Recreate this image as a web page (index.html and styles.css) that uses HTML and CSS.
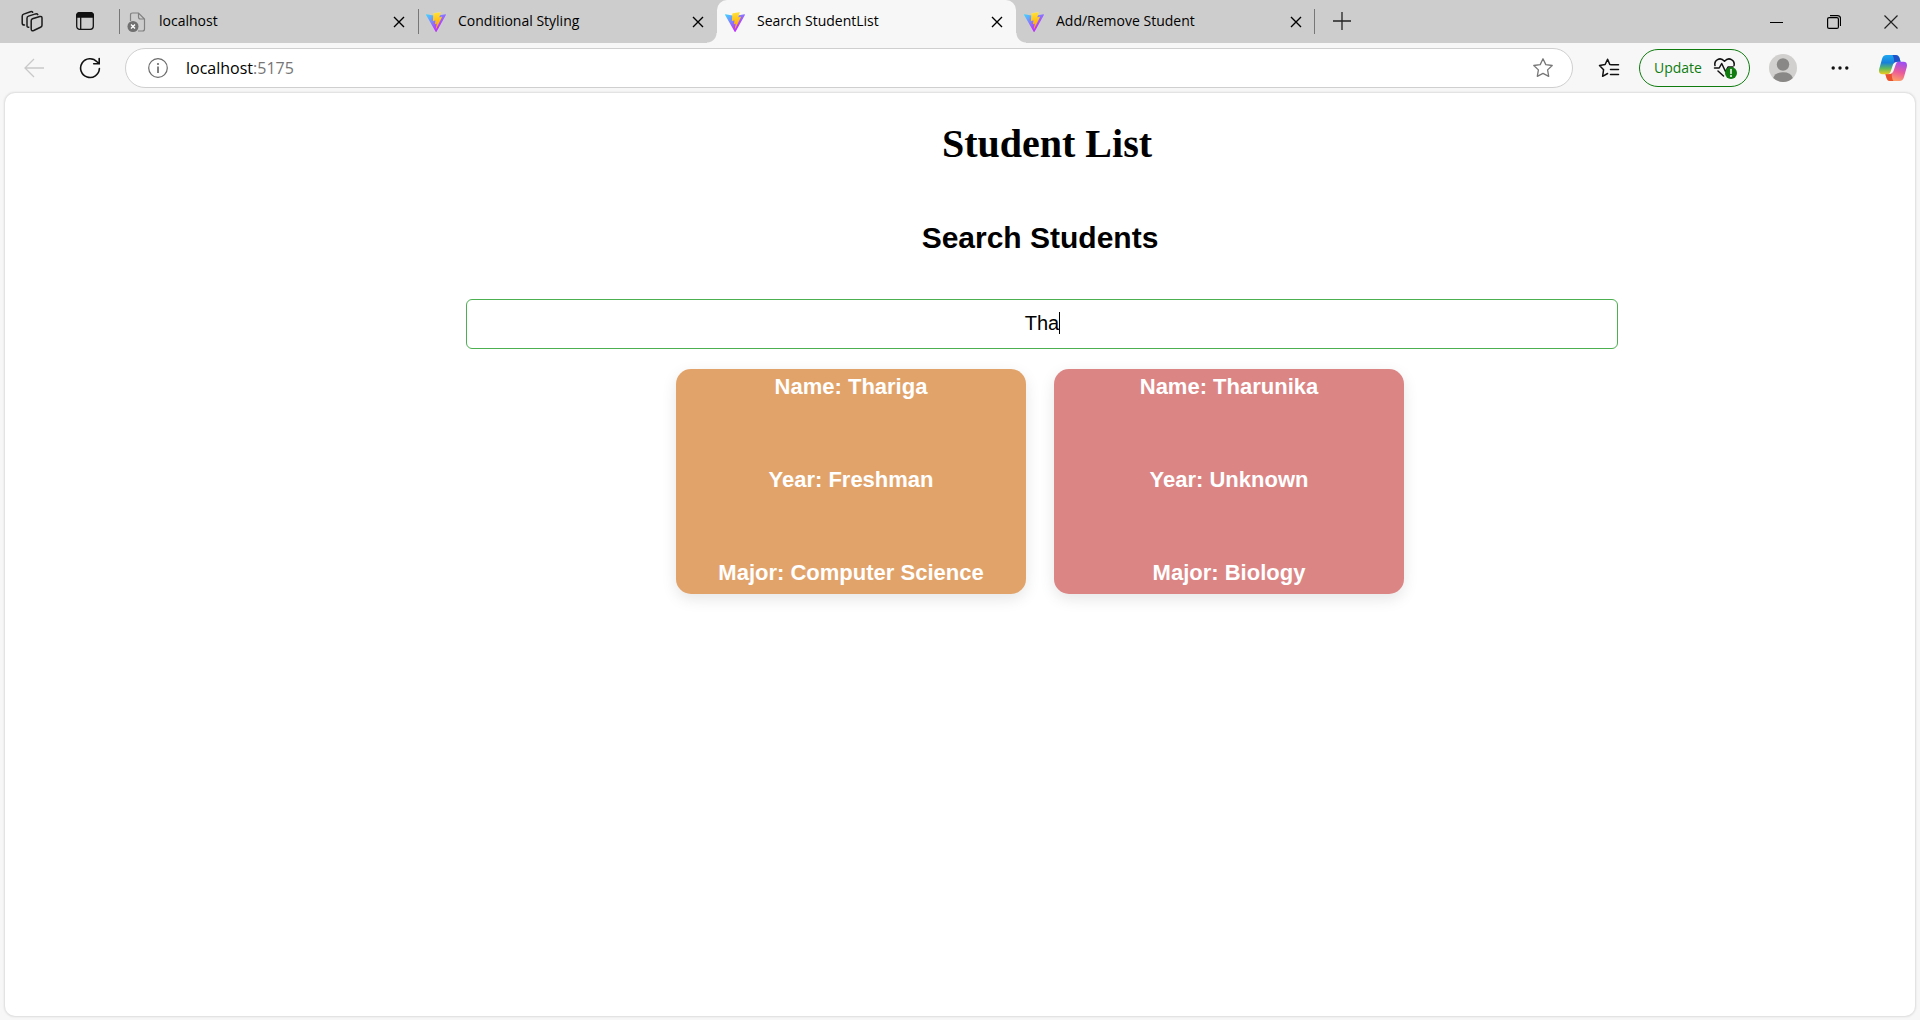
FILE: index.html
```html
<!DOCTYPE html>
<html lang="en">
<head>
<meta charset="utf-8">
<title>Search StudentList</title>
<link rel="stylesheet" href="styles.css">
</head>
<body>
<svg class="defs" aria-hidden="true">
  <defs>
    <linearGradient id="vite-a" x1="-1%" x2="58%" y1="8%" y2="79%"><stop offset="0" stop-color="#41d1ff"/><stop offset="1" stop-color="#bd34fe"/></linearGradient>
    <linearGradient id="vite-b" x1="43%" x2="50%" y1="2%" y2="89%"><stop offset="0" stop-color="#ffea83"/><stop offset=".08" stop-color="#ffdd35"/><stop offset="1" stop-color="#ffa800"/></linearGradient>
    <linearGradient id="cp-a" x1="0" x2="0" y1="0" y2="1"><stop offset="0" stop-color="#1fa8f0"/><stop offset=".4" stop-color="#1580dc"/><stop offset=".7" stop-color="#5fb95e"/><stop offset="1" stop-color="#f0cc1c"/></linearGradient>
    <linearGradient id="cp-b" x1=".6" x2=".3" y1="0" y2="1"><stop offset="0" stop-color="#a04df0"/><stop offset=".5" stop-color="#ec5c98"/><stop offset="1" stop-color="#ffa860"/></linearGradient>
    <symbol id="vite" viewBox="0 0 256 257">
      <path fill="url(#vite-a)" d="M255.153 37.938L134.897 252.976c-2.483 4.44-8.862 4.466-11.382.048L.875 37.958c-2.746-4.814 1.371-10.646 6.827-9.67l120.385 21.517a6.537 6.537 0 0 0 2.322-.004l117.867-21.483c5.438-.991 9.574 4.796 6.877 9.62Z"/>
      <path fill="url(#vite-b)" d="M185.432.063L96.44 17.501a3.268 3.268 0 0 0-2.634 3.014l-5.474 92.456a3.268 3.268 0 0 0 3.997 3.378l24.777-5.718c2.318-.535 4.413 1.507 3.936 3.838l-7.361 36.047c-.495 2.426 1.782 4.5 4.151 3.78l15.304-4.649c2.372-.72 4.652 1.36 4.15 3.788l-11.698 56.621c-.732 3.542 3.979 5.473 5.943 2.437l1.313-2.028l72.516-144.72c1.215-2.423-.88-5.186-3.54-4.672l-25.505 4.922c-2.396.462-4.435-1.77-3.759-4.114l16.646-57.705c.677-2.35-1.37-4.583-3.769-4.113Z"/>
    </symbol>
    <symbol id="cross" viewBox="0 0 12 12"><path d="M1 1l10 10M11 1L1 11" fill="none" stroke="currentColor" stroke-width="1.4"/></symbol>
  </defs>
</svg>

<div class="browser">
  <header class="tab-strip">
    <div class="strip-tools">
      <button class="icon-btn" aria-label="Workspaces">
        <svg width="22" height="22" viewBox="0 0 22 22" fill="none" stroke="#1b1b1b" stroke-width="1.5" stroke-linejoin="round" stroke-linecap="round"><path d="M11.500 8.700 18.800 6.500q2.200-.5 2.200 1.500v7.200q0 1.500-1.500 2.100l-6.800 3.200q-2.500.9-2.500-1.400V10.800q0-1.600 1.300-2.100Z"/><path d="M7.800 17.200q-1.800.300-1.800-1.400V8.300q0-1.700 1.500-2.200L14.500 3.900q1.700-.400 2.300.700"/><path d="M3.500 15Q1.200 15 1.200 13.200V6.300Q1.200 4.600 2.700 4.100L9.500 1.700q1.500-.400 2.200.500"/></svg>
      </button>
      <button class="icon-btn" aria-label="Tab actions menu">
        <svg width="18" height="18" viewBox="0 0 18 18" fill="none" stroke="#111" stroke-width="1.3"><rect x=".7" y=".7" width="16.600" height="16.600" rx="3"/><path d="M.7 5V3.700q0-3 3-3h10.600q3 0 3 3V5Z" fill="#111"/><path d="M4.700 5v12"/></svg>
      </button>
    </div>
    <nav class="tabs" aria-label="Tabs">
      <div class="tab">
        <svg class="favicon" viewBox="0 0 20 20" fill="none" stroke="#808080" stroke-width="1.200"><path d="M3.500 9V3q0-2 2-2h6l6 6v10q0 2-2 2H11M11.500 1v4q0 2 2 2h4"/><circle cx="6" cy="14.500" r="5.500" fill="#707070" stroke="none"/><path d="M4 12.500l4 4m0-4l-4 4" stroke="#fff" stroke-width="1.400"/></svg>
        <span class="tab-title">localhost</span>
        <button class="tab-close" aria-label="Close tab"><svg width="12" height="12"><use href="#cross"/></svg></button>
      </div>
      <div class="tab">
        <svg class="favicon"><use href="#vite"/></svg>
        <span class="tab-title">Conditional Styling</span>
        <button class="tab-close" aria-label="Close tab"><svg width="12" height="12"><use href="#cross"/></svg></button>
      </div>
      <div class="tab tab-active">
        <svg class="favicon"><use href="#vite"/></svg>
        <span class="tab-title">Search StudentList</span>
        <button class="tab-close" aria-label="Close tab"><svg width="12" height="12"><use href="#cross"/></svg></button>
      </div>
      <div class="tab tab-last">
        <svg class="favicon"><use href="#vite"/></svg>
        <span class="tab-title">Add/Remove Student</span>
        <button class="tab-close" aria-label="Close tab"><svg width="12" height="12"><use href="#cross"/></svg></button>
      </div>
    </nav>
    <button class="new-tab" aria-label="New tab"><svg width="18" height="18" viewBox="0 0 18 18"><path d="M9 0v18M0 9h18" stroke="#222" stroke-width="1.300"/></svg></button>
    <div class="window-controls">
      <button aria-label="Minimize"><svg width="14" height="14" viewBox="0 0 14 14"><path d="M0 7.500h13" stroke="#000"/></svg></button>
      <button aria-label="Restore"><svg width="14" height="14" viewBox="0 0 14 14" fill="none" stroke="#000" stroke-width="1.200"><rect x=".6" y="2.600" width="10.800" height="10.800" rx="1.500"/><path d="M3 .6h7.500q3 0 3 3V11"/></svg></button>
      <button aria-label="Close"><svg width="14" height="14" viewBox="0 0 14 14"><path d="M.5.5l13 13m0-13l-13 13" stroke="#222" stroke-width="1.200"/></svg></button>
    </div>
  </header>

  <div class="toolbar">
    <div class="nav-buttons">
      <button class="icon-btn" aria-label="Back" disabled><svg width="20" height="20" viewBox="0 0 20 20" fill="none" stroke="#c9c9c9" stroke-width="1.300"><path d="M20 10H1M10 1L1 10l9 9"/></svg></button>
      <button class="icon-btn" aria-label="Refresh"><svg width="22" height="22" viewBox="0 0 22 22" fill="none" stroke="#111" stroke-width="1.600" stroke-linecap="round"><path d="M20.400 11.500A9.400 9.400 0 1 1 18 4.800l2 1.800M20.200 1.500v5.300h-5.500"/></svg></button>
    </div>
    <div class="address-bar">
      <svg width="20" height="20" viewBox="0 0 20 20" fill="none" stroke="#6b6b6b" stroke-width="1.200"><circle cx="10" cy="10" r="9.300"/><path d="M10 8.500V15" stroke-width="1.700"/><circle cx="10" cy="6" r="1.100" fill="#6b6b6b" stroke="none"/></svg>
      <a class="url" href="#">localhost<span class="port">:5175</span></a>
      <button class="icon-btn favorite" aria-label="Add to favorites"><svg width="22" height="22" viewBox="0 0 22 22" fill="none" stroke="#777" stroke-width="1.300" stroke-linejoin="round"><path d="M11 1.800l2.800 5.800 6.400.9-4.600 4.400 1.100 6.400L11 16.300l-5.700 3 1.100-6.400L1.800 8.500l6.400-.9Z"/></svg></button>
    </div>
    <div class="toolbar-actions">
      <button class="icon-btn" aria-label="Favorites"><svg width="22" height="22" viewBox="0 0 22 22" fill="none" stroke="#111" stroke-width="1.500" stroke-linejoin="round" stroke-linecap="round"><path d="M13.500 7.800L11.800 7.500 9.600 2.200 7.100 7.500 1.500 8.400l4.100 4.300-1 6.600 5-2.800M14 7.800h6.500M12.500 12.500h8M12.500 17.500h8"/></svg></button>
      <button class="update">Update
        <svg width="24" height="22" viewBox="0 0 24 22" fill="none" stroke="#111" stroke-width="1.500" stroke-linecap="round" stroke-linejoin="round"><path d="M2 8.500C.8 3.500 6.800-.8 11.500 4.200 16.200-.8 22.200 3.500 21 8.500M1.500 11h4.700l2.500-4.500 3.800 8L15 10h5M5 14l5.500 5"/><circle cx="18" cy="16" r="6" fill="#107c10" stroke="none"/><path d="M18 12.500v4" stroke="#fff"/><circle cx="18" cy="19" r="1" fill="#fff" stroke="none"/></svg>
      </button>
      <button class="icon-btn" aria-label="Profile"><svg width="28" height="28" viewBox="0 0 28 28"><circle cx="14" cy="14" r="14" fill="#d2d0ce"/><circle cx="14" cy="10.500" r="6.200" fill="#8a8886"/><path d="M4.200 24Q6 18.300 14 18.300T23.800 24A14 14 0 0 1 4.200 24Z" fill="#8a8886"/></svg></button>
      <button class="icon-btn" aria-label="Settings and more"><svg width="18" height="6" viewBox="0 0 18 6" fill="#111"><circle cx="2.200" cy="3" r="1.700"/><circle cx="9" cy="3" r="1.700"/><circle cx="15.800" cy="3" r="1.700"/></svg></button>
      <button class="icon-btn copilot" aria-label="Copilot"><svg width="28" height="26" viewBox="0 0 28 26"><path fill="url(#cp-a)" d="M7.500 0H17q2.500 0 3.300 2.500l1.300 4.300H18q-2.500 0-3.300 2.500L12 17.200q-.8 2-3 2H3.500Q-.8 19.200.2 14L3 4Q4 0 7.500 0Z"/><path fill="#2352c8" d="M13.500 0H17q2.500 0 3.300 2.500l1.300 4.300H18q-2 0-3 1.800Q15.500 3 13.500 0Z"/><path fill="url(#cp-b)" d="M20.500 26H11q-2.500 0-3.300-2.500L6.400 19.200H10q2.500 0 3.300-2.500L16 8.800q.8-2 3-2h5.500Q28.800 6.800 27.800 12L25 22Q24 26 20.500 26Z"/><path fill="#e8502e" d="M14.500 26H11q-2.500 0-3.300-2.500L6.400 19.200H10q2 0 3-1.800-.8 5.600 1.500 8.600Z"/><path fill="#f7f7f7" d="M18.500 7.300q-3.500-.6-4.500 2.200L11.500 17q-.6 1.500-1.800 1.900 3.600.4 4.600-2.300l2.600-7.500q.5-1.400 1.600-1.800Z"/></svg></button>
    </div>
  </div>

  <main class="page">
    <h1 class="page-title">Student List</h1>
    <section class="search">
      <h2 class="search-title"><label for="search">Search Students</label></h2>
      <div class="search-field">
        <input id="search" type="text" value="Tha">
        <span class="caret"></span>
      </div>
    </section>
    <div class="cards">
      <article class="card card-freshman">
        <p>Name: Thariga</p>
        <p>Year: Freshman</p>
        <p>Major: Computer Science</p>
      </article>
      <article class="card card-unknown">
        <p>Name: Tharunika</p>
        <p>Year: Unknown</p>
        <p>Major: Biology</p>
      </article>
    </div>
  </main>
</div>
</body>
</html>
```

FILE: styles.css
```css
* { box-sizing: border-box; }

body {
  margin: 0;
  background: #f7f7f7;
  color: #000;
  font-family: "Open Sans", "Noto Sans", sans-serif;
}

button {
  padding: 0;
  border: 0;
  background: none;
  color: inherit;
  font: inherit;
}

svg { display: block; flex: none; }

.defs { position: absolute; width: 0; height: 0; }

.browser {
  display: flex;
  flex-direction: column;
  min-height: 100vh;
}

.icon-btn {
  display: flex;
  align-items: center;
  justify-content: center;
}

/* Tab strip */

.tab-strip {
  display: flex;
  height: 43px;
  background: #cdcdcd;
}

.strip-tools {
  display: flex;
  align-items: center;
  gap: 33px;
  width: 119px;
  padding: 0 0 1px 21px;
}

.tabs {
  display: flex;
  flex: 0 1 1196px;
  min-width: 0;
}

.tab {
  position: relative;
  display: flex;
  align-items: center;
  flex: 1 1 0;
  min-width: 0;
  padding: 0 13px 0 8px;
  background: linear-gradient(#777, #777) left center / 1px 25px no-repeat;
}

.favicon { width: 20px; height: 20px; }

.tab-title {
  flex: 1;
  margin-left: 12px;
  padding-bottom: 2px;
  overflow: hidden;
  font-size: 14px;
  line-height: 20px;
  white-space: nowrap;
}

.tab-active {
  z-index: 1;
  border-radius: 10px 10px 0 0;
  background: #f7f7f7;
}

.tab-active::before,
.tab-active::after {
  content: "";
  position: absolute;
  bottom: 0;
  width: 10px;
  height: 10px;
}

.tab-active::before {
  right: 100%;
  background: radial-gradient(circle at 0 0, transparent 9px, #f7f7f7 10px);
}

.tab-active::after {
  left: 100%;
  background: radial-gradient(circle at 100% 0, transparent 9px, #f7f7f7 10px);
}

.tab-last { background-position: right center; }

.new-tab { padding: 0 18px 2px; }

.window-controls {
  display: flex;
  margin-left: auto;
  padding-right: 1px;
}

.window-controls button {
  display: flex;
  align-items: center;
  justify-content: center;
  width: 57px;
}

/* Toolbar */

.toolbar {
  display: flex;
  align-items: center;
  height: 50px;
  padding: 0 13px 0 24px;
}

.nav-buttons {
  display: flex;
  gap: 35px;
  width: 101px;
}

.address-bar {
  display: flex;
  flex: 1;
  align-items: center;
  height: 40px;
  padding: 0 18px 0 22px;
  border: 1px solid #cfcfcf;
  border-radius: 20px;
  background: #fff;
}

.url {
  margin-left: 18px;
  color: #000;
  font-size: 16px;
  line-height: 24px;
  text-decoration: none;
}

.port { color: #767676; }

.favorite { margin-left: auto; }

.toolbar-actions {
  display: flex;
  align-items: center;
  margin-left: 25px;
}

.update {
  display: flex;
  align-items: center;
  justify-content: space-between;
  width: 111px;
  height: 38px;
  margin: 0 19px;
  padding: 0 12px 1px 14px;
  border: 1px solid #107c10;
  border-radius: 19px;
  color: #107c10;
  font-size: 14px;
}

.toolbar-actions .icon-btn + .icon-btn { margin-left: 34px; }

.toolbar-actions .icon-btn + .copilot { margin-left: 30px; }

/* Page */

.page {
  flex: 1;
  margin: 0 5px 4px;
  padding: 28px 0 0 160px;
  border-radius: 10px;
  background: #fff;
  box-shadow: 0 0 2px 1px #dcdcdc;
  font-family: "Liberation Sans", Arial, sans-serif;
  text-align: center;
}

.page-title {
  margin: 0;
  padding-left: 14px;
  font-family: "Liberation Serif", "Times New Roman", serif;
  font-size: 40px;
  line-height: 46px;
}

.search-title {
  margin: 53px 0 44px;
  font-size: 30px;
  line-height: 35px;
}

.search {
  padding-left: 4px;
}

.search-title {
  margin-left: -4px;
}

.search-field {
  position: relative;
  width: 60vw;
  max-width: 100%;
  margin: 0 auto;
}

.search-field input {
  display: block;
  width: 100%;
  height: 50px;
  padding: 0 12px 2px;
  border: 1px solid #4caf50;
  border-radius: 6px;
  outline: 0;
  background: #fff;
  font: 20px "Liberation Sans", Arial, sans-serif;
  text-align: center;
}

.caret {
  position: absolute;
  top: 13px;
  left: calc(50% + 17px);
  width: 1px;
  height: 22px;
  background: #000;
}

.cards {
  display: flex;
  flex-wrap: wrap;
  justify-content: center;
  gap: 28px;
  margin-top: 20px;
}

.card {
  display: flex;
  flex-direction: column;
  gap: 67px;
  width: 350px;
  padding: 5px 0 8px;
  border-radius: 15px;
  box-shadow: 0 5px 15px rgba(0, 0, 0, 0.1);
  color: #fff;
  font-size: 22px;
  font-weight: 700;
  line-height: 26px;
}

.card p { margin: 0; }

.card-freshman { background: #e2a36b; }

.card-unknown { background: #dc8585; }
```
